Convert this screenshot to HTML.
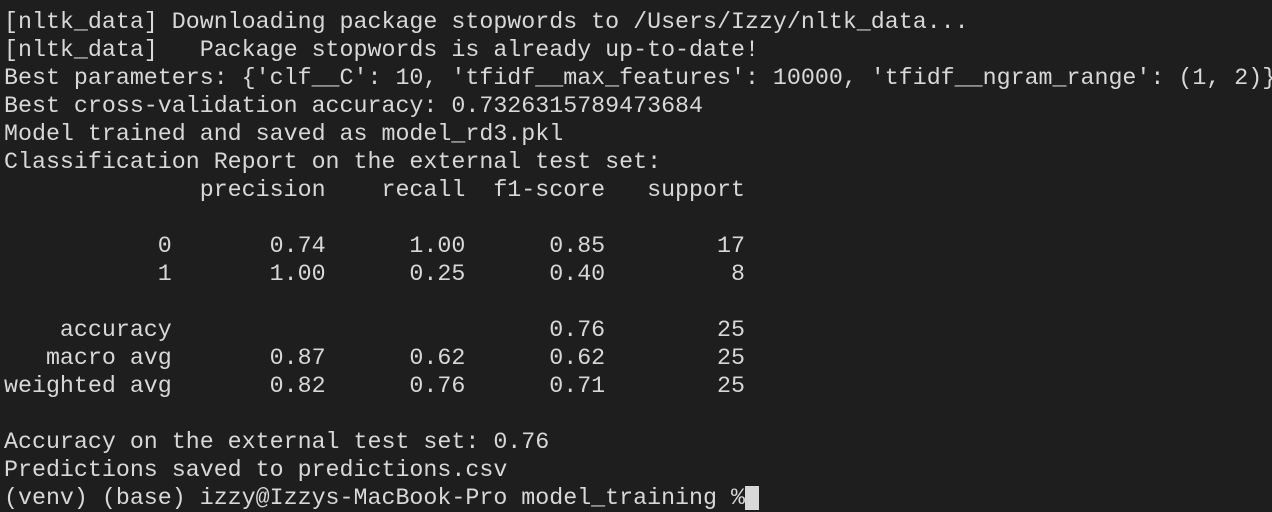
<!DOCTYPE html>
<html><head><style>
html,body{margin:0;padding:0;background:#1e1e1e;width:1272px;height:488px;overflow:hidden}
pre{margin:0;position:absolute;left:4px;top:8px;font-family:"Liberation Mono",monospace;font-size:23.3px;line-height:28px;color:#d8d8d8;white-space:pre}
.c{display:inline-block;width:14px;height:24px;background:#d8d8d8;vertical-align:top;margin-top:2px}
</style></head><body><pre>[nltk_data] Downloading package stopwords to /Users/Izzy/nltk_data...
[nltk_data]   Package stopwords is already up-to-date!
Best parameters: {'clf__C': 10, 'tfidf__max_features': 10000, 'tfidf__ngram_range': (1, 2)}
Best cross-validation accuracy: 0.7326315789473684
Model trained and saved as model_rd3.pkl
Classification Report on the external test set:
              precision    recall  f1-score   support

           0       0.74      1.00      0.85        17
           1       1.00      0.25      0.40         8

    accuracy                           0.76        25
   macro avg       0.87      0.62      0.62        25
weighted avg       0.82      0.76      0.71        25

Accuracy on the external test set: 0.76
Predictions saved to predictions.csv
(venv) (base) izzy@Izzys-MacBook-Pro model_training %<span class="c"></span></pre></body></html>
